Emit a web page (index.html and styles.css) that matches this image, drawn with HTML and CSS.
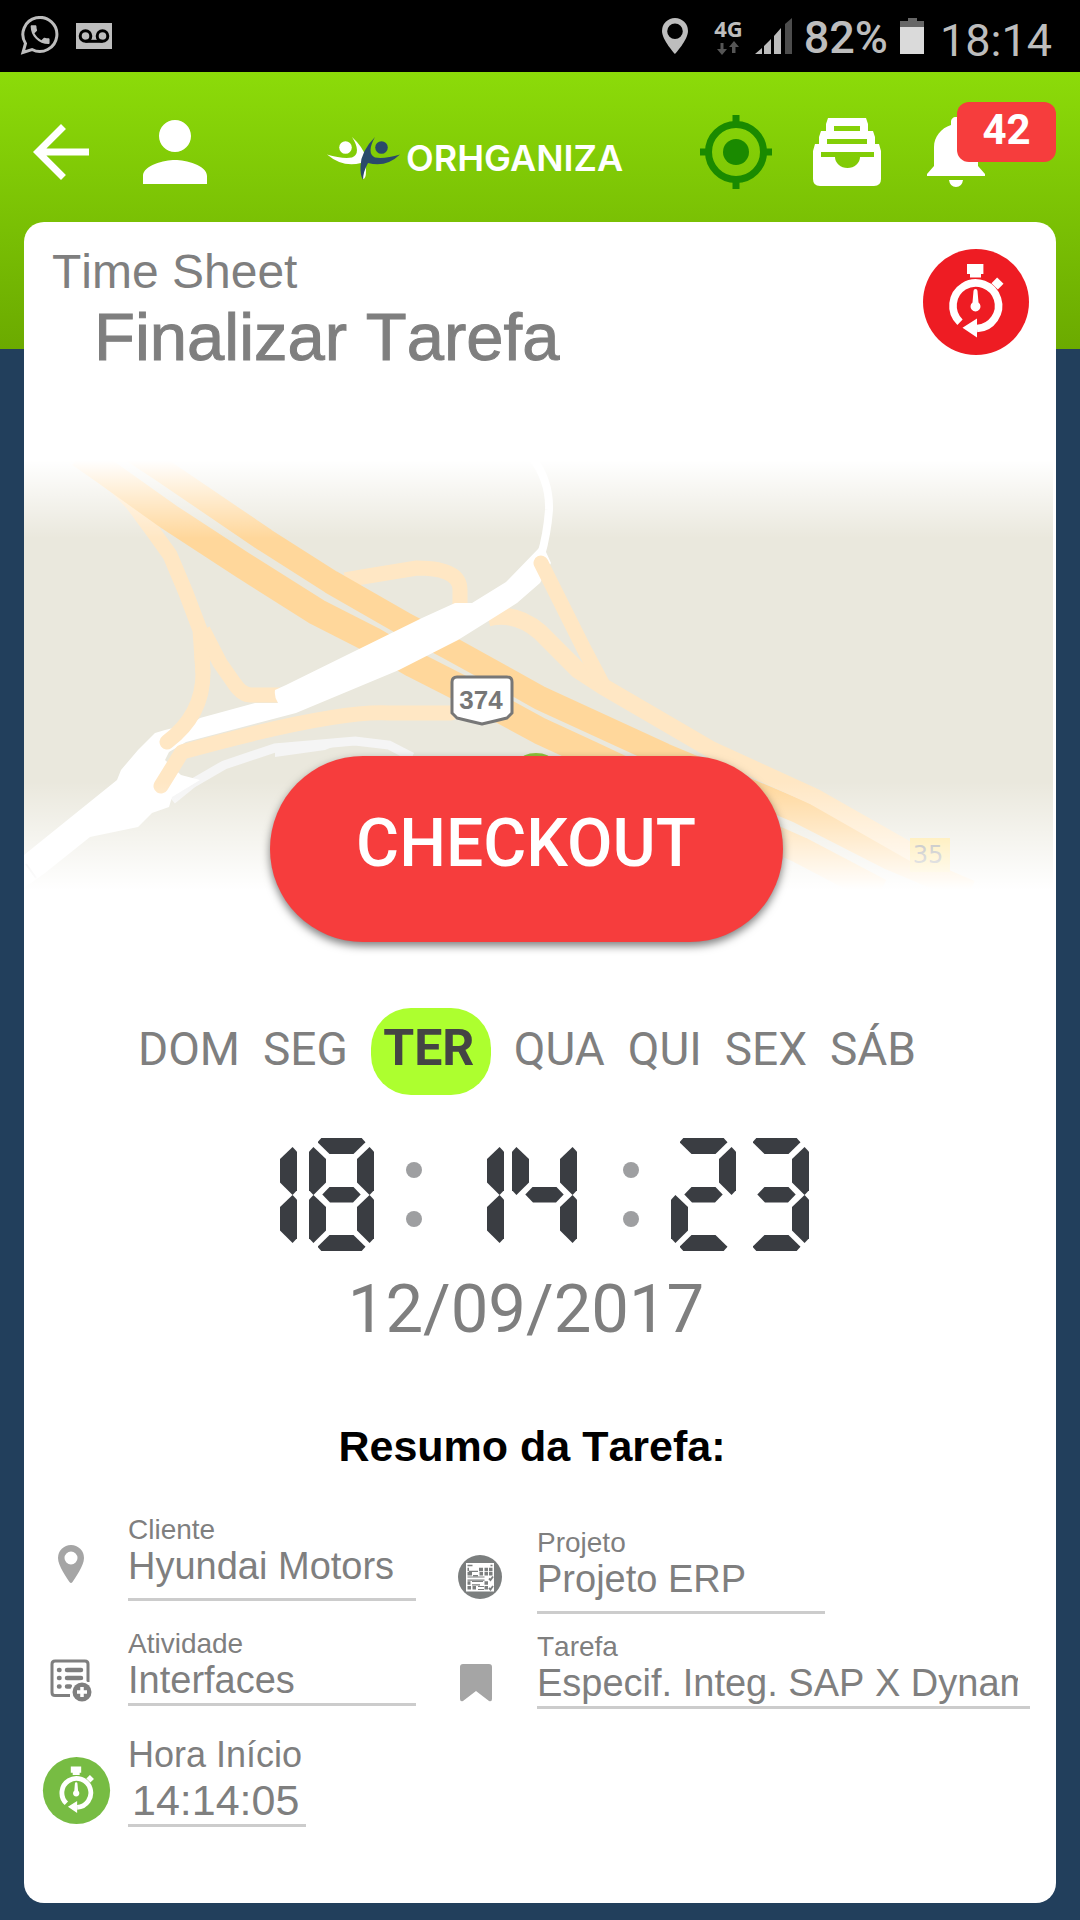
FILE: index.html
```html
<!DOCTYPE html>
<html lang="pt-BR">
<head>
<meta charset="utf-8">
<meta name="viewport" content="width=device-width, initial-scale=1">
<title>Time Sheet - Finalizar Tarefa</title>
<link rel="stylesheet" href="styles.css">
</head>
<body>
<svg class="defs" aria-hidden="true">
  <symbol id="stopwatch" viewBox="0 0 112 112">
    <circle cx="56" cy="56" r="53" fill="currentColor"/>
    <path d="M40 76.2A22.8 22.8 0 1 1 57 82.5" fill="none" stroke="#fff" stroke-width="7.6"/>
    <path d="M42.5 81.7 57 72.5V91.5ZM47 18h16.400v10h-2.400v3.500H50V28h-3z" fill="#fff"/>
    <rect x="73.500" y="33" width="8" height="9" transform="rotate(-45 77.500 37.500)" fill="#fff"/>
    <path d="M53.500 45a2 2 0 0 1 4 0l1 11.500a5 5 0 1 1-6 0z" fill="#fff"/>
  </symbol>
</svg>

<div class="status-bar">
  <svg class="ico-whatsapp" viewBox="0 0 40 40" aria-hidden="true"><path d="M3 36.500 5.500 27.500A17 17 0 1 1 12 33.500Z" fill="none" stroke="#bdbdbd" stroke-width="3"/><path transform="translate(7.500 6) scale(1.050)" fill="#bdbdbd" d="M6.620 10.790c1.440 2.830 3.760 5.140 6.590 6.590l2.200-2.200c.27-.27.67-.36 1.020-.24 1.120.37 2.330.57 3.570.57.55 0 1 .45 1 1V20c0 .55-.45 1-1 1-9.390 0-17-7.610-17-17 0-.55.45-1 1-1h3.500c.55 0 1 .45 1 1 0 1.250.2 2.450.57 3.570.11.35.03.74-.25 1.020l-2.200 2.200z"/></svg>
  <svg class="ico-voicemail" viewBox="0 0 36 26" aria-hidden="true"><path fill="#bdbdbd" d="M0 0h36v26H0z"/><circle cx="9.500" cy="13" r="5.300" fill="none" stroke="#000" stroke-width="3"/><circle cx="26.500" cy="13" r="5.300" fill="none" stroke="#000" stroke-width="3"/><path d="M9.500 18.300h17" stroke="#000" stroke-width="3"/></svg>
  <div class="status-right">
    <svg class="ico-location" viewBox="0 0 26 36" aria-hidden="true"><path fill="#bdbdbd" fill-rule="evenodd" d="M13 0a13 13 0 0 1 13 13c0 9-13 23-13 23S0 22 0 13A13 13 0 0 1 13 0zm0 5.500a7.800 7.800 0 1 0 0 15.600 7.800 7.800 0 0 0 0-15.600z"/></svg>
    <div class="network"><span>4G</span><svg viewBox="0 0 22 14" aria-hidden="true"><path fill="#555" d="M3.500 2h3v6H10L5 14 0 8h3.500zM15 12h3.500V6H22l-5-6-5 6h3z"/></svg></div>
    <svg class="ico-signal" viewBox="0 0 37 36" aria-hidden="true"><path fill="#bdbdbd" d="M0 36l7-6v6zM9 36V28l7-7v15zM19 36V18l7-8v26z"/><path fill="#4d4d4d" d="M30 36V6l7-6v36z"/></svg>
    <span class="battery-level">82%</span>
    <svg class="ico-battery" viewBox="0 0 24 36" aria-hidden="true"><path fill="#666" d="M0 3h8V0h9v3h7v6H0z"/><path fill="#dadada" d="M0 9h24v27H0z"/></svg>
    <time class="status-time">18:14</time>
  </div>
</div>

<div class="screen">
  <header class="app-bar">
    <button class="icon-btn back" aria-label="Voltar"><svg viewBox="0 0 24 24"><path fill="#fff" d="M20 11H7.830l5.590-5.590L12 4l-8 8 8 8 1.410-1.410L7.830 13H20v-2z"/></svg></button>
    <button class="icon-btn person" aria-label="Perfil"><svg viewBox="0 0 24 24"><path fill="#fff" d="M12 12c2.210 0 4-1.790 4-4s-1.790-4-4-4-4 1.790-4 4 1.790 4 4 4zm0 2c-2.670 0-8 1.340-8 4v2h16v-2c0-2.660-5.330-4-8-4z"/></svg></button>
    <div class="logo">
      <svg viewBox="327 135 74 45" aria-hidden="true"><g fill="#fff"><circle cx="345.500" cy="146.500" r="6.300"/><path d="M327 153.500Q342 158 352 156.500Q362 152 352 136Q362 145 366 156V170Q366 178 363 178L361 162Q343 167 327 153.500Z"/></g><g fill="#2a4a6b"><circle cx="381.500" cy="146.500" r="6.300"/><path d="M400 153.500Q385 158 375 156.500Q366 152 375 136Q361 150 360.500 165Q360 174 363 179Q363 171 368 162Q386 167 400 153.500Z"/></g></svg>
      <span>ORHGANIZA</span>
    </div>
    <div class="bar-actions">
      <button class="icon-btn target" aria-label="Localização"><svg viewBox="0 0 86 86"><g fill="none" stroke="#1a8a00" stroke-width="7"><circle cx="43" cy="43" r="27.500"/><path d="M43 6v10M43 70v10M7 43h10M69 43h10"/></g><circle cx="43" cy="43" r="13" fill="#1a8a00"/></svg></button>
      <button class="icon-btn inbox" aria-label="Caixa de entrada"><svg viewBox="0 0 72 72"><path fill="#fff" fill-rule="evenodd" d="M17 2h38l2 6v7h5l2 6v7h4l2 7v28q0 7-7 7H9q-7 0-7-7V35l2-7h4v-7l2-6h5V8zM23 10v5h26v-5zM16 23v5h40v-5zM10 36v5h14a12.500 11 0 0 0 25 0h14v-5z"/></svg></button>
      <button class="icon-btn bell" aria-label="Notificações"><svg viewBox="0 7 82 82"><path fill="#fff" d="M34 76h14q-1 7-7 7t-7-7zM41 13c3 0 5 2 5 5v3c11 3 17 12 17 22v19l7 8v2H12v-2l7-8V43c0-10 7-19 17-22v-3c0-3 2-5 5-5z"/></svg><span class="badge">42</span></button>
    </div>
  </header>

  <main class="card">
    <div class="card-head">
      <div>
        <p class="eyebrow">Time Sheet</p>
        <h1>Finalizar Tarefa</h1>
      </div>
      <svg class="head-icon" aria-hidden="true"><use href="#stopwatch"/></svg>
    </div>

    <section class="checkout">
      <svg class="map" viewBox="24 456 1032 434" role="img" aria-label="Mapa">
        <defs><linearGradient id="fade" x1="0" y1="0" x2="0" y2="1"><stop offset="0.010" stop-color="#fff"/><stop offset="0.190" stop-color="#fff" stop-opacity="0"/><stop offset="0.750" stop-color="#fff" stop-opacity="0"/><stop offset="1" stop-color="#fff"/></linearGradient></defs>
        <path fill="#eae8dd" d="M24 456h1029v434H24z"/>
        <path d="M172 800 193 783 224 765 275 748 355 741 389 745 412 757" fill="none" stroke="#f5f5f5" stroke-width="9"/>
        <path d="M275 744 355 738 325 750 275 757z" fill="#f5f5f5"/>
        <g fill="none" stroke-linejoin="round" stroke="#ffe7c4" stroke-width="15">
          <path d="M110 480 132 503 152 530 170 555 186 593 200 630 203 673M203 630 220 663 234 683Q242 695 251 695H280M345 580 362 577 417 568Q460 568 460 590V610"/>
        </g>
        <g fill="none" stroke="#ffd79b" stroke-linejoin="round">
          <path stroke-width="24" d="M130 449 162 470 265 540 331 582 406 625 448 647 506 679 540 698 664 755 800 812 890 858 970 892"/>
          <path stroke-width="27" d="M80 454 103 470 169 517 241 564 317 612 372 640 413 664 468 692 540 731 592 755 700 806 800 850 880 892"/>
        </g>
        <path d="M488 618Q515 611 540 632L578 670 604 687 712 750 815 797 915 854" fill="none" stroke="#ffe7c4" stroke-width="17"/>
        <path fill="#fff" d="M275 690 286 685 422 618 455 603 472 603 506 582 540 547 546 552 551 563 540 583 517 603 458 640 399 670 296 713 186 742 169 752 165 760 181 775 200 780 172 797 169 807 152 813 138 827 90 837 45 873 24 888V855L117 780 121 770 138 750 155 733 165 730 193 723 200 718 255 703H278Q274 697 275 690Z"/>
        <path d="M531 456Q550 480 549 510 547 535 541 555" fill="none" stroke="#fff" stroke-width="8"/>
        <g fill="none" stroke="#ffe7c4" stroke-width="15" stroke-linecap="round" stroke-linejoin="round">
          <path d="M202 655 203 673Q203 715 167 742M161 786 182 752Q335 710 389 713H451M541 563 561 603 583 647 604 687"/>
        </g>
        <path d="M26 864 36 878" stroke="#ddd" stroke-width="2"/>
        <ellipse cx="536" cy="761" rx="16" ry="8" fill="#8fc23c"/>
        <path d="M457 677h50q5 0 5 5v31l-5 5q-12 3-25 6-13-3-25-6l-5-5v-31q0-5 5-5z" fill="#fff" stroke="#777" stroke-width="3"/>
        <text class="map-shield" x="481" y="709">374</text>
        <path fill="#ffe082" d="M910 838h40v34h-40z"/>
        <text class="map-tag" x="928" y="863">35</text>
        <path fill="url(#fade)" d="M24 456h1032v434H24z"/>
      </svg>
      <button class="checkout-btn">CHECKOUT</button>
    </section>

    <ul class="days">
      <li>DOM</li><li>SEG</li><li class="today">TER</li><li>QUA</li><li>QUI</li><li>SEX</li><li>SÁB</li>
    </ul>

    <div class="clock" role="timer" aria-label="18:14:23">
      <div class="pair hours"><div class="digit one"><i class="ur"></i><i class="lr"></i></div><div class="digit"><i class="t"></i><i class="ul"></i><i class="ur"></i><i class="m"></i><i class="ll"></i><i class="lr"></i><i class="b"></i></div></div>
      <div class="colon"></div>
      <div class="pair minutes"><div class="digit one"><i class="ur"></i><i class="lr"></i></div><div class="digit"><i class="ul"></i><i class="ur"></i><i class="m"></i><i class="lr"></i></div></div>
      <div class="colon"></div>
      <div class="pair"><div class="digit"><i class="t"></i><i class="ur"></i><i class="m"></i><i class="ll"></i><i class="b"></i></div><div class="digit"><i class="t"></i><i class="ur"></i><i class="m"></i><i class="lr"></i><i class="b"></i></div></div>
    </div>
    <p class="date">12/09/2017</p>

    <h2>Resumo da Tarefa:</h2>

    <form class="summary">
      <div class="column">
        <div class="field">
          <svg class="field-icon" viewBox="0 0 44 44" aria-hidden="true"><path fill="#a5a5a5" fill-rule="evenodd" d="M22 3a13 13 0 0 1 13 13c0 8-9 20-11.500 24q-1.500 2-3 0C18 36 9 24 9 16A13 13 0 0 1 22 3zm0 6.500a6.500 6.500 0 1 0 0 13 6.500 6.500 0 0 0 0-13z"/></svg>
          <div class="field-body"><label for="cliente">Cliente</label><input id="cliente" type="text" value="Hyundai Motors" readonly></div>
        </div>
        <div class="field compact">
          <svg class="field-icon" viewBox="0 0 44 44" aria-hidden="true"><path d="M21 37.500H6q-3 0-3-3V6q0-3 3-3h30q3 0 3 3v18" fill="none" stroke="#7f7f7f" stroke-width="3"/><g stroke="#7f7f7f" stroke-width="4.500" stroke-linecap="round"><path d="M10 12h.5M18 12h14M10 20h.5M18 20h14M10 28.500h.5M18 28.500h3"/></g><circle cx="33" cy="34" r="11.500" fill="#fff"/><circle cx="33" cy="34" r="9.500" fill="#7f7f7f"/><path d="M33 29v10M28 34h10" stroke="#fff" stroke-width="3.500"/></svg>
          <div class="field-body"><label for="atividade">Atividade</label><input id="atividade" type="text" value="Interfaces" readonly></div>
        </div>
        <div class="field time">
          <svg class="field-icon" aria-hidden="true"><use href="#stopwatch"/></svg>
          <div class="field-body"><label for="inicio">Hora Início</label><input id="inicio" type="text" value="14:14:05" readonly></div>
        </div>
      </div>
      <div class="column tasks">
        <div class="field">
          <svg class="field-icon" viewBox="0 0 44 44" aria-hidden="true"><circle cx="22" cy="22" r="22" fill="#7b7e7e"/><path fill="#fff" d="M8 8h28v28.500H8z"/><g stroke="#7b7e7e" fill="none"><path stroke-width="1.500" d="M9.500 10.500h5M32.500 10.500h2"/><path stroke-width="3.400" d="M9.500 14.500h1.500M21 14.500h4M26.500 14.500h3.500M31 14.500h3.500M9.500 18.800h4.500M21.500 18.800h3.500M26.500 18.800h3.500M31 18.800h3.500M9.500 28h3M26.500 28h3.500M9.500 32.800h3.500M14.500 32.800h3.500M26.500 32.800h3.500"/><path stroke-width="1.200" d="M11 16.300h9M15 20.700h5M9.500 22h17M9.500 25.200h17M14 26.500h11M14 29.800h8M20 31.500h6M20 34.500h6"/><path stroke-width="1.800" d="M31 23.500l1.500 1.500 2.500-3.500M31 33l1.500 1.500 2.500-3.500"/></g></svg>
          <div class="field-body"><label for="projeto">Projeto</label><input id="projeto" type="text" value="Projeto ERP" readonly></div>
        </div>
        <div class="field compact wide">
          <svg class="field-icon" viewBox="0 0 44 44" aria-hidden="true"><path fill="#a5a5a5" d="M5 3h26q3 0 3 3v32q0 3-3 2L18 30 5 40q-3 1-3-2V6q0-3 3-3z"/></svg>
          <div class="field-body"><label for="tarefa">Tarefa</label><input id="tarefa" type="text" value="Especif. Integ. SAP X Dynamics" readonly></div>
        </div>
      </div>
    </form>
  </main>
</div>
</body>
</html>
```
FILE: styles.css
```css
* { box-sizing: border-box; }

body {
  margin: 0;
  background: #223f5c;
  color: #7f7f7f;
  font-family: "Liberation Sans", Arial, sans-serif;
  font-kerning: none;
}

p, h1, h2, ul { margin: 0; padding: 0; }
svg { display: block; flex: none; }
.defs { position: absolute; width: 0; height: 0; }

/* Status bar */
.status-bar {
  display: flex;
  align-items: center;
  gap: 16px;
  height: 72px;
  padding: 0 28px 0 20px;
  background: #000;
  color: #bdbdbd;
  font-family: Roboto, sans-serif;
}
.status-right { display: flex; align-items: center; gap: 12px; margin-left: auto; }
.ico-whatsapp { width: 40px; height: 40px; }
.ico-voicemail { width: 36px; height: 26px; }
.ico-location { width: 26px; height: 36px; margin-right: 14px; }
.ico-signal { width: 37px; height: 36px; }
.ico-battery { width: 24px; height: 36px; margin-right: 4px; }
.network { display: flex; flex-direction: column; align-items: center; gap: 2px; }
.network span { font: 700 22px/22px "Open Sans", sans-serif; }
.network svg { width: 22px; height: 14px; }
.battery-level { padding-top: 2px; font-size: 45px; font-weight: 500; }
.status-time { padding-top: 8px; font-size: 45px; }

/* App bar */
.screen {
  padding: 0 24px 18px;
  background: linear-gradient(#8cdb09, #6baa00) top / 100% 277px no-repeat;
}
.app-bar {
  display: flex;
  align-items: center;
  height: 150px;
  margin-left: -5px;
  padding-top: 10px;
}
.icon-btn {
  position: relative;
  flex: none;
  padding: 0;
  border: 0;
  background: none;
}
.icon-btn svg { width: 100%; }
.back { width: 84px; }
.person { width: 96px; margin-left: 24px; }
.logo {
  display: flex;
  align-items: center;
  gap: 5px;
  margin-left: 104px;
  padding-top: 12px;
  color: #fff;
  font: 600 36px/44px Inter, sans-serif;
}
.logo svg { width: 74px; height: 45px; }
.bar-actions { display: flex; align-items: center; gap: 32px; margin-left: auto; }
.target { width: 86px; }
.inbox { width: 72px; }
.bell { width: 141px; }
.bell svg { width: 82px; }
.badge {
  position: absolute;
  top: -9px;
  right: 0;
  width: 99px;
  height: 60px;
  border-radius: 12px;
  background: #f63d3d;
  color: #fff;
  font: 700 42px/56px Roboto, sans-serif;
  text-align: center;
}

/* Card */
.card {
  padding-bottom: 76px;
  border-radius: 20px;
  background: #fff;
}
.card-head {
  display: flex;
  align-items: flex-start;
  justify-content: space-between;
  padding: 24px 24px 80px 28px;
}
.eyebrow { font-size: 48px; line-height: 52px; }
h1 {
  padding-left: 42px;
  font-size: 67px;
  font-weight: 400;
  line-height: 78px;
  -webkit-text-stroke: 1px #7f7f7f;
}
.head-icon { width: 112px; height: 112px; color: #ee1c23; }

/* Map with the checkout button over its lower edge */
.checkout { display: grid; }
.map { grid-area: 1 / 1; width: 100%; margin-bottom: 52px; }
.map-shield { fill: #777; font: 700 26px "Liberation Sans", sans-serif; text-anchor: middle; }
.map-tag { fill: #888; font: 24px "DejaVu Sans", sans-serif; text-anchor: middle; }
.checkout-btn {
  grid-area: 1 / 1;
  place-self: end center;
  width: 513px;
  height: 186px;
  margin-right: 28px;
  padding: 0 0 10px;
  border: 0;
  border-radius: 93px;
  background: #f63d3d;
  box-shadow: 0 4px 8px rgba(0, 0, 0, 0.5);
  color: #fff;
  font: 500 66px/78px Roboto, sans-serif;
}

/* Week days */
.days {
  display: flex;
  align-items: baseline;
  justify-content: center;
  gap: 23px;
  margin-top: 66px;
  padding-right: 26px;
  list-style: none;
  font: 46px/54px Roboto, sans-serif;
}
.today {
  width: 120px;
  height: 87px;
  padding: 10px 4px 0 0;
  border-radius: 40px;
  background: #adff2f;
  color: #444;
  font-size: 50px;
  font-weight: 700;
  line-height: 60px;
  text-align: center;
}

/* Seven-segment clock */
.clock {
  display: flex;
  justify-content: center;
  gap: 32px;
  margin-top: 43px;
  padding-left: 9px;
}
.pair { display: flex; gap: 8px; }
.hours { gap: 12px; }
.minutes { padding: 0 14px 0 33px; }
.digit {
  display: grid;
  grid-template-columns: 17px 31px 17px;
  grid-template-rows: 57px 56px;
  width: 65px;
  height: 113px;
}
.digit.one { grid-template-columns: 0 0 17px; width: 17px; }
.digit i { background: #3a3d42; }
.t, .m, .b { grid-column: 1 / -1; justify-self: center; width: 48px; height: 16px; }
.t { grid-row: 1; clip-path: polygon(0 27%, 8% 0, 92% 0, 100% 27%, 75% 100%, 25% 100%); }
.b { grid-row: 2; align-self: end; clip-path: polygon(0 73%, 8% 100%, 92% 100%, 100% 73%, 75% 0, 25% 0); }
.m { grid-row: 1 / -1; align-self: center; clip-path: polygon(10% 50%, 26% 0, 74% 0, 90% 50%, 74% 100%, 26% 100%); }
.ul, .ll, .ur, .lr { width: 17px; height: 48px; }
.ul, .ur { grid-row: 1; align-self: end; }
.ll, .lr { grid-row: 2; }
.ul, .ll { grid-column: 1; clip-path: polygon(0 10%, 26% 0, 100% 25%, 100% 74%, 26% 100%, 0 90%); }
.ur, .lr { grid-column: 3; clip-path: polygon(100% 10%, 74% 0, 0 25%, 0 74%, 74% 100%, 100% 90%); }
.colon {
  display: flex;
  flex-direction: column;
  justify-content: space-between;
  padding: 24px 0;
}
.colon::before, .colon::after {
  content: "";
  width: 16px;
  height: 16px;
  border-radius: 50%;
  background: #9e9fa1;
}
.date {
  margin-top: 19px;
  padding-right: 28px;
  font: 67px/78px Roboto, sans-serif;
  text-align: center;
}

/* Task summary */
h2 {
  margin-top: 74px;
  padding-right: 16px;
  color: #000;
  font-size: 43px;
  line-height: 48px;
  text-align: center;
}
.summary {
  display: grid;
  grid-template-columns: 409fr 585fr;
  margin-top: 45px;
  padding: 0 26px 0 12px;
}
.column { display: flex; flex-direction: column; gap: 28px; }
.tasks { gap: 18px; padding-top: 13px; }
.field {
  display: grid;
  grid-template-columns: 70px minmax(0, 288px);
  column-gap: 22px;
  align-items: center;
}
.field-icon { justify-self: center; width: 44px; height: 44px; margin-top: 12px; }
.field label { display: block; font-size: 28px; line-height: 30px; white-space: nowrap; }
.field input {
  display: block;
  width: 100%;
  height: 56px;
  padding: 0 12px 10px 0;
  border: 0;
  border-bottom: 3px solid #ccc;
  border-radius: 0;
  outline: 0;
  background: none;
  color: inherit;
  font: 38px/43px "Liberation Sans", Arial, sans-serif;
  font-kerning: none;
}
.compact .field-icon { margin-top: 24px; }
.compact input { height: 47px; padding-bottom: 1px; }
.wide { grid-template-columns: 70px minmax(0, 1fr); }
.time { grid-template-columns: 80px 178px; column-gap: 12px; }
.time .field-icon { width: 71px; height: 71px; margin-top: 20px; color: #77bc43; }
.time label { font-size: 36px; line-height: 42px; }
.time input { height: 51px; padding: 0 0 0 4px; font-size: 43px; line-height: 48px; }
```
